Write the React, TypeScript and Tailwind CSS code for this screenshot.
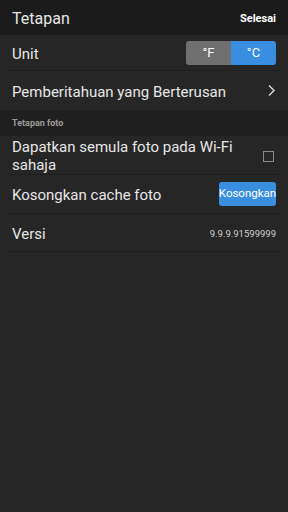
export default function App() {
  return (
    <div className="w-[288px] h-[512px] bg-[#262626] text-[#e6e6e6] font-['Roboto',sans-serif] overflow-hidden">
      <div className="h-[35px] bg-[#1b1b1b] flex items-center justify-between px-3 pt-[3px]">
        <p className="text-[16px]">Tetapan</p>
        <p className="text-[11px] font-bold text-white">Selesai</p>
      </div>

      <div className="px-2">
        <div className="h-[36px] flex items-center justify-between pl-1 pr-1 pt-[3px] border-b border-[#1f1f1f]">
          <p className="text-[15px]">Unit</p>
          <div className="flex h-[24px] w-[90px] -mt-[3px] rounded-[3px] overflow-hidden text-[13px] text-white">
            <div className="flex-1 bg-[#6f6f6f] flex items-center justify-center">°F</div>
            <div className="flex-1 bg-[#3a8edf] flex items-center justify-center">°C</div>
          </div>
        </div>
        <div className="h-[39px] flex items-center justify-between pl-1 pr-1 pt-[3px]">
          <p className="text-[15px]">Pemberitahuan yang Berterusan</p>
          <svg width="9" height="13" viewBox="0 0 9 13" className="-mt-[3px]">
            <path d="M2 1.5 L7 6.5 L2 11.5" stroke="#cfcfcf" strokeWidth="1.6" fill="none" />
          </svg>
        </div>
      </div>

      <div className="h-[26px] bg-[#1f1f1f] flex items-center px-3 pt-[2px]">
        <p className="text-[9px] font-bold text-[#9a9a9a]">Tetapan foto</p>
      </div>

      <div className="px-2">
        <div className="h-[39px] flex items-center justify-between pl-1 pr-[6px] pt-[2px] border-b border-[#1f1f1f]">
          <p className="text-[15px] leading-[18px] w-[230px]">Dapatkan semula foto pada Wi-Fi sahaja</p>
          <div className="w-[11px] h-[11px] border border-[#8a8a8a]" />
        </div>
        <div className="h-[39px] flex items-center justify-between pl-1 pr-1 pt-[3px] border-b border-[#1f1f1f]">
          <p className="text-[15px]">Kosongkan cache foto</p>
          <div className="h-[24px] w-[57px] -mt-[3px] bg-[#3a8edf] rounded-[3px] flex items-center justify-center text-[11.5px] text-white">
            Kosongkan
          </div>
        </div>
        <div className="h-[38px] flex items-center justify-between pl-1 pr-1 pt-[3px] border-b border-[#1f1f1f]">
          <p className="text-[15px]">Versi</p>
          <p className="text-[9.5px] text-[#cfcfcf]">9.9.9.91599999</p>
        </div>
      </div>
    </div>
  );
}
